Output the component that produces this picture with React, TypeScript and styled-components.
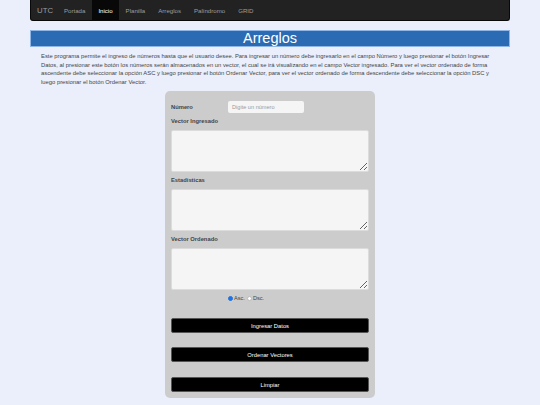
import React from "react";
import styled, { createGlobalStyle } from "styled-components";

const Global = createGlobalStyle`
  html, body { margin: 0; padding: 0; background: #ebeffb; }
  body { font-family: "Liberation Sans", Arial, sans-serif; color: #333; }
`;

const Container = styled.div`
  width: 480px;
  margin: 0 auto;
`;

const Navbar = styled.nav`
  height: 21px;
  background: #222;
  border: 1px solid #080808;
  border-top: none;
  border-radius: 0 0 3px 3px;
  display: flex;
  align-items: stretch;
  padding-left: 6px;
  box-sizing: border-box;
`;

const Brand = styled.span`
  font-size: 7.8px;
  color: #9d9d9d;
  display: flex;
  align-items: center;
  margin-right: 4.5px;
`;

const NavItem = styled.a<{ $active?: boolean }>`
  font-size: 6.1px;
  color: ${(p) => (p.$active ? "#fff" : "#9d9d9d")};
  background: ${(p) => (p.$active ? "#080808" : "transparent")};
  display: flex;
  align-items: center;
  padding: 0 6.5px;
  text-decoration: none;
`;

const Header = styled.h1`
  margin: 9px 0 0;
  height: 17px;
  box-sizing: border-box;
  background: #2b6bb3;
  border: 1px solid #8fb6e6;
  color: #fff;
  font-weight: normal;
  font-size: 14.5px;
  line-height: 15px;
  text-align: center;
`;

const Intro = styled.p`
  margin: 5px 0 0;
  padding: 0 4px 0 11px;
  font-size: 5.85px;
  line-height: 8.6px;
  color: #444;
`;

const Card = styled.form`
  width: 210px;
  margin: 5px auto 0;
  box-sizing: border-box;
  background: #cccccc;
  border-radius: 5px;
  padding: 10px 6px 6px;
  display: flex;
  flex-direction: column;
`;

const Row = styled.div`
  display: flex;
  align-items: center;
`;

const Label = styled.label<{ $width?: number; $mt?: number }>`
  display: block;
  font-size: 5.8px;
  font-weight: bold;
  line-height: 8px;
  height: 8px;
  color: #444;
  width: ${(p) => (p.$width ? `${p.$width}px` : "auto")};
  margin-top: ${(p) => p.$mt ?? 0}px;
`;

const NumberInput = styled.input`
  width: 76px;
  height: 12px;
  box-sizing: border-box;
  border: none;
  border-radius: 2px;
  background: #f5f5f5;
  font-family: "Liberation Sans", Arial, sans-serif;
  font-size: 5.6px;
  padding: 0 4px;
  outline: none;
  &::placeholder { color: #9a9a9a; }
`;

const Area = styled.textarea`
  display: block;
  width: 100%;
  height: 42px;
  box-sizing: border-box;
  margin-top: 5px;
  border: 1px solid #dcdcdc;
  border-radius: 2px;
  background: #f5f5f5;
  resize: vertical;
  outline: none;
`;

const RadioRow = styled.div`
  display: flex;
  align-items: center;
  height: 8px;
  margin-top: 4px;
  padding-left: 57px;
  font-size: 5.6px;
  color: #444;
`;

const Radio = styled.input`
  appearance: none;
  width: 5px;
  height: 5px;
  margin: 0 1px 0 0;
  border-radius: 50%;
  background: #fff;
  border: 0.5px solid #bbb;
  box-sizing: border-box;
  &:checked {
    background: #1a73e8;
    border-color: #1a73e8;
  }
`;

const RadioText = styled.span`
  margin-right: 2px;
`;

const Button = styled.button<{ $mt: number }>`
  display: block;
  width: 100%;
  height: 15px;
  margin-top: ${(p) => p.$mt}px;
  background: #000;
  color: #fff;
  border: 1px solid #555;
  border-radius: 2px;
  font-family: "Liberation Sans", Arial, sans-serif;
  font-size: 5.8px;
  padding: 0;
`;

export default function App() {
  return (
    <>
      <Global />
      <Container>
        <Navbar>
          <Brand>UTC</Brand>
          <NavItem>Portada</NavItem>
          <NavItem $active>Inicio</NavItem>
          <NavItem>Planilla</NavItem>
          <NavItem>Arreglos</NavItem>
          <NavItem>Palíndromo</NavItem>
          <NavItem>GRID</NavItem>
        </Navbar>
        <Header>Arreglos</Header>
        <Intro>
          Este programa permite el ingreso de números hasta que el usuario desee. Para ingresar un número debe
          ingresarlo en el campo Número y luego presionar el botón Ingresar
          <br />
          Datos, al presionar este botón los números serán almacenados en un vector, el cual se irá visualizando en el
          campo Vector ingresado. Para ver el vector ordenado de forma
          <br />
          ascendente debe seleccionar la opción ASC y luego presionar el botón Ordenar Vector, para ver el vector
          ordenado de forma descendente debe seleccionar la opción DSC y
          <br />
          luego presionar el botón Ordenar Vector.
        </Intro>
        <Card onSubmit={(e) => e.preventDefault()}>
          <Row>
            <Label $width={57}>Número</Label>
            <NumberInput placeholder="Digite un número" />
          </Row>
          <Label $mt={4}>Vector Ingresado</Label>
          <Area />
          <Label $mt={4}>Estadisticas</Label>
          <Area />
          <Label $mt={4}>Vector Ordenado</Label>
          <Area />
          <RadioRow>
            <Radio type="radio" name="ord" defaultChecked />
            <RadioText>Asc.</RadioText>
            <Radio type="radio" name="ord" />
            <RadioText>Dsc.</RadioText>
          </RadioRow>
          <Button type="button" $mt={16}>Ingresar Datos</Button>
          <Button type="button" $mt={14}>Ordenar Vectores</Button>
          <Button type="button" $mt={15}>Limpiar</Button>
        </Card>
      </Container>
    </>
  );
}
